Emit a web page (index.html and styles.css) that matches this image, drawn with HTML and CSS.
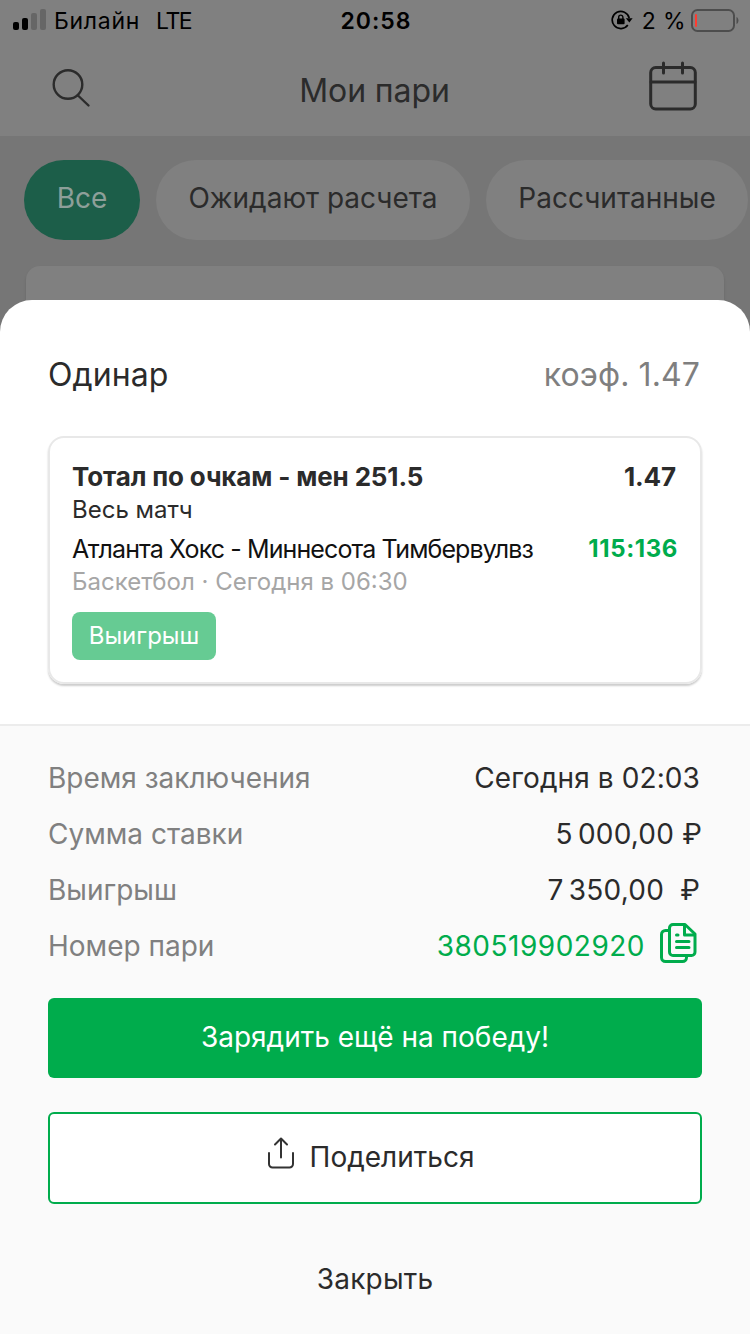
FILE: index.html
```
<!DOCTYPE html>
<html lang="ru">
<head>
    <meta charset="UTF-8">
    <title>Мои пари</title>
    <link rel="stylesheet" href="styles.css">
</head>
<body>
    <div class="screen">
        <div class="status-bar">
            <div class="status-left">
                <svg class="signal" width="34" height="22" viewBox="0 0 34 22">
                    <rect x="0" y="13" width="6" height="8" rx="2"/>
                    <rect x="9" y="9" width="6" height="12" rx="2"/>
                    <rect class="signal-off" x="18" y="4" width="6" height="17" rx="2"/>
                    <rect class="signal-off" x="27" y="0" width="6" height="21" rx="2"/>
                </svg>
                <span class="carrier">Билайн</span>
                <span class="network">LTE</span>
            </div>
            <div class="clock">20:58</div>
            <div class="status-right">
                <svg width="22" height="20" viewBox="0 0 22 20">
                    <path d="M18.200 8A8.600 8.600 0 1 0 16.800 15" fill="none" stroke="#000" stroke-width="1.7"/>
                    <path d="M14.800 8.200h6.800l-3.200 4.400z"/>
                    <rect x="6" y="8.500" width="7.600" height="5.800" rx="1"/>
                    <path d="M7.700 9V7.200a2.100 2.100 0 0 1 4.200 0V9" fill="none" stroke="#000" stroke-width="1.400"/>
                </svg>
                <span class="percent">2 %</span>
                <svg class="battery" width="48" height="24" viewBox="0 0 48 24">
                    <rect x="1" y="1" width="42" height="21" rx="5.500" fill="none" stroke="#4d4d4d" stroke-width="2"/>
                    <rect x="4" y="5" width="2" height="13" rx="1" fill="#ff3b30"/>
                    <path d="M45.500 8c2.600 1 2.600 6 0 7z" fill="#4d4d4d"/>
                </svg>
            </div>
        </div>

        <div class="header">
            <svg width="40" height="40" viewBox="0 0 40 40" fill="none" stroke="#2b2b2b" stroke-width="2.4" stroke-linecap="round">
                <circle cx="16" cy="16.500" r="14.300"/>
                <path d="M26 27.500l10.500 10"/>
            </svg>
            <h1>Мои пари</h1>
            <svg class="calendar" width="48" height="50" viewBox="0 0 48 50" fill="none" stroke="#2b2b2b" stroke-width="3" stroke-linecap="round">
                <rect x="1.700" y="6.500" width="44.600" height="41.500" rx="5"/>
                <path d="M2 21h44M14.500 2v10M33.500 2v10"/>
            </svg>
        </div>

        <div class="filters">
            <div class="filter active">Все</div>
            <div class="filter waiting">Ожидают расчета</div>
            <div class="filter settled">Рассчитанные</div>
        </div>
        <div class="bet-card"></div>

        <div class="sheet">
            <div class="sheet-top">
                <div class="sheet-title">
                    <span>Одинар</span>
                    <span class="coef">коэф. 1.47</span>
                </div>
                <div class="event">
                    <div class="event-row outcome">
                        <span>Тотал по очкам - мен 251.5</span>
                        <span class="odds">1.47</span>
                    </div>
                    <div class="period">Весь матч</div>
                    <div class="event-row">
                        <span class="teams">Атланта Хокс - Миннесота Тимбервулвз</span>
                        <span class="score">115:136</span>
                    </div>
                    <div class="sport">Баскетбол · Сегодня в 06:30</div>
                    <div class="badge">Выигрыш</div>
                </div>
            </div>

            <div class="sheet-bottom">
                <div class="info-row">
                    <span class="label">Время заключения</span>
                    <span class="value">Сегодня в 02:03</span>
                </div>
                <div class="info-row">
                    <span class="label">Сумма ставки</span>
                    <span class="value sum">5&#8201;000,00 ₽</span>
                </div>
                <div class="info-row">
                    <span class="label">Выигрыш</span>
                    <span class="value win">7&#8201;350,00&nbsp; ₽</span>
                </div>
                <div class="info-row">
                    <span class="label">Номер пари</span>
                    <span class="value number">
                        380519902920
                        <svg width="40" height="42" viewBox="0 0 40 42" fill="none" stroke="#00ac4c" stroke-width="3" stroke-linecap="round" stroke-linejoin="round">
                            <path d="M9.500 8.500H6.500a4 4 0 0 0-4 4v23a4 4 0 0 0 4 4h17a4 4 0 0 0 4-4V34"/>
                            <path d="M14 2.500h12l10 9.500v18a3.500 3.500 0 0 1-3.500 3.500H14a3.500 3.500 0 0 1-3.500-3.500V6A3.500 3.500 0 0 1 14 2.500z"/>
                            <path d="M25.500 3V13h10M17.500 13h1.500M17.500 19.500h12.500M17.500 25.500h12.500"/>
                        </svg>
                    </span>
                </div>
                <div class="button primary">Зарядить ещё на победу!</div>
                <div class="button share">
                    <svg width="26" height="32" viewBox="0 0 26 32" fill="none" stroke="#333" stroke-width="2" stroke-linecap="round" stroke-linejoin="round">
                        <path d="M1 16v11a3.500 3.500 0 0 0 3.500 3.500h17A3.500 3.500 0 0 0 25 27V16M13 20.500V2M7 7.500L13 1.500l6 6"/>
                    </svg>
                    <span>Поделиться</span>
                </div>
                <div class="close">Закрыть</div>
            </div>
        </div>
    </div>
</body>
</html>
```

FILE: styles.css
```
body {
    margin: 0;
    font-family: Inter, "Liberation Sans", sans-serif;
    color: #2b2b2b;
}
.screen {
    position: relative;
    width: 750px;
    height: 1334px;
    overflow: hidden;
    background-color: #767676;
    white-space: nowrap;
}

/* status bar */
.status-bar {
    display: grid;
    grid-template-columns: 1fr auto 1fr;
    align-items: center;
    height: 40px;
    padding: 0 11px 0 13px;
    background-color: #808080;
    color: #000;
    font-size: 23px;
}
.status-left, .status-right {
    display: flex;
    align-items: center;
}
.status-right {
    justify-content: flex-end;
}
.carrier {
    margin: 1px 16px 0 7px;
    letter-spacing: 0.7px;
}
.network {
    margin-top: 1px;
    letter-spacing: -1.4px;
}
.signal-off {
    fill: #666;
}
.clock {
    font-weight: 600;
    letter-spacing: 1px;
    padding-top: 1px;
}
.percent {
    margin: 1px 5px 0 9px;
    letter-spacing: 0.4px;
}
.battery {
    margin-top: 1px;
}

.header {
    display: flex;
    justify-content: space-between;
    align-items: center;
    box-sizing: border-box;
    height: 96px;
    padding: 0 53px 0 52px;
    background-color: #808080;
}
.header h1 {
    margin: 5px 0 0 8px;
    font-size: 32px;
    font-weight: 400;
    letter-spacing: -0.1px;
}
.calendar {
    margin-bottom: 4px;
}
.filters {
    display: flex;
    gap: 16px;
    padding: 24px 24px 26px;
}
.filter {
    flex-shrink: 0;
    box-sizing: border-box;
    height: 80px;
    border-radius: 40px;
    background-color: #808080;
    font-size: 28px;
    line-height: 77px;
    text-align: center;
}
.filter.active {
    width: 116px;
    background-color: #1c5e49;
    color: #8d9f99;
}
.filter.waiting {
    width: 314px;
}
.filter.settled {
    width: 262px;
}
.bet-card {
    height: 80px;
    margin: 0 26px;
    border-radius: 14px;
    background-color: #808080;
    box-shadow: 0 2px 3px rgba(0,0,0,0.12);
}

/* bottom sheet */
.sheet {
    position: absolute;
    top: 300px;
    left: 0;
    right: 0;
    bottom: 0;
    display: flex;
    flex-direction: column;
    border-radius: 32px 32px 0 0;
    background-color: #fff;
}
.sheet-top {
    padding: 50px 48px 40px;
}
.sheet-title {
    display: flex;
    justify-content: space-between;
    font-size: 32px;
    line-height: 50px;
    margin-bottom: 36px;
    padding-right: 2px;
    letter-spacing: 0.1px;
}
.coef {
    color: #7f7f7f;
}
.event {
    box-sizing: border-box;
    height: 248px;
    padding: 22px 22px 0;
    border: 2px solid #e8e8e8;
    border-radius: 16px;
    box-shadow: 0 2px 2px rgba(0,0,0,0.2);
}
.event-row {
    display: flex;
    justify-content: space-between;
}
.outcome {
    font-size: 26px;
    font-weight: 700;
    line-height: 34px;
    letter-spacing: -0.15px;
}
.odds {
    padding-right: 2px;
}
.period {
    font-size: 24px;
    line-height: 32px;
    margin-bottom: 6px;
}
.teams {
    font-size: 25px;
    line-height: 34px;
    letter-spacing: -0.9px;
    color: #111;
}
.score {
    font-size: 24px;
    font-weight: 700;
    line-height: 34px;
    letter-spacing: 0.6px;
    color: #00ac4c;
}
.sport {
    font-size: 24px;
    line-height: 32px;
    color: #a6a6a6;
}
.badge {
    width: 144px;
    margin-top: 14px;
    border-radius: 8px;
    background-color: #66cb93;
    color: #fff;
    font-size: 24px;
    line-height: 47px;
    height: 48px;
    text-align: center;
}
.sheet-bottom {
    flex: 1;
    padding: 24px 48px 0;
    border-top: 2px solid #ececec;
    background-color: #fafafa;
}
.info-row {
    display: flex;
    justify-content: space-between;
    height: 56px;
    font-size: 28px;
    line-height: 56px;
}
.label {
    color: #808080;
}
.value {
    padding-right: 2px;
    letter-spacing: 0.1px;
}
.sum {
    padding-right: 0;
    letter-spacing: 0.2px;
}
.win {
    padding-right: 2px;
    letter-spacing: 0.2px;
}
.number {
    display: flex;
    align-items: center;
    gap: 14px;
    padding-right: 3px;
    letter-spacing: 0.5px;
    color: #00ac4c;
}
.number svg {
    margin-top: -6px;
}
.button {
    box-sizing: border-box;
    border-radius: 6px;
    font-size: 28px;
}
.primary {
    height: 80px;
    margin-top: 24px;
    background-color: #00ac4c;
    color: #fff;
    line-height: 78px;
    text-align: center;
}
.share {
    display: flex;
    justify-content: center;
    align-items: center;
    gap: 16px;
    height: 92px;
    margin-top: 34px;
    padding: 0 8px 3px 0;
    border: 2px solid #00ac4c;
    background-color: #fff;
}
.share svg {
    margin-top: -7px;
}
.close {
    margin-top: 50px;
    font-size: 28px;
    line-height: 50px;
    letter-spacing: 0.2px;
    text-align: center;
}
```
